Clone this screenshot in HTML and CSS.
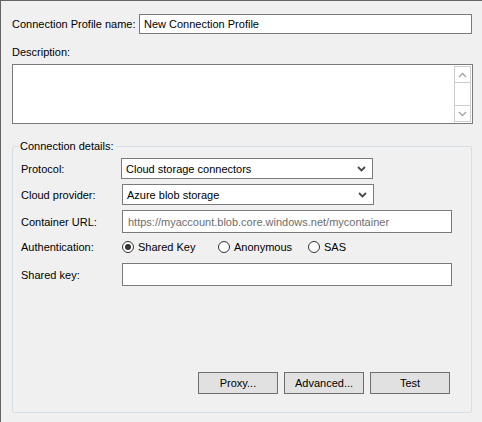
FILE: index.html
```html
<!DOCTYPE html>
<html lang="en">

<head>
    <meta charset="UTF-8">
    <title>Connection Profile</title>
    <link rel="stylesheet" href="styles.css">
</head>

<body>
    <div class="dialog">
        <div class="name-row">
            <label class="name-label">Connection Profile name:</label>
            <div class="field name-field">New Connection Profile</div>
        </div>

        <label class="desc-label">Description:</label>
        <div class="textarea">
            <div class="scrollbar">
                <div class="sb-btn">
                    <svg width="9" height="6" viewBox="0 0 9 6"><path d="M1 5 L4.5 1.5 L8 5" fill="none" stroke="#a2a2a2" stroke-width="1.3"/></svg>
                </div>
                <div class="sb-track"></div>
                <div class="sb-btn">
                    <svg width="9" height="6" viewBox="0 0 9 6"><path d="M1 1 L4.5 4.5 L8 1" fill="none" stroke="#a2a2a2" stroke-width="1.3"/></svg>
                </div>
            </div>
        </div>

        <fieldset class="group">
            <legend>Connection details:</legend>

            <div class="row">
                <span class="label">Protocol:</span>
                <div class="combo">
                    <span>Cloud storage connectors</span>
                    <svg width="9" height="6" viewBox="0 0 9 6"><path d="M1 1 L4.5 4.5 L8 1" fill="none" stroke="#4a4a4a" stroke-width="1.8"/></svg>
                </div>
            </div>

            <div class="row">
                <span class="label">Cloud provider:</span>
                <div class="combo">
                    <span>Azure blob storage</span>
                    <svg width="9" height="6" viewBox="0 0 9 6"><path d="M1 1 L4.5 4.5 L8 1" fill="none" stroke="#4a4a4a" stroke-width="1.8"/></svg>
                </div>
            </div>

            <div class="row">
                <span class="label">Container URL:</span>
                <div class="field wide placeholder">https://myaccount.blob.core.windows.net/mycontainer</div>
            </div>

            <div class="row auth-row">
                <span class="label">Authentication:</span>
                <div class="radios">
                    <span class="radio checked"><i></i>Shared Key</span>
                    <span class="radio"><i></i>Anonymous</span>
                    <span class="radio"><i></i>SAS</span>
                </div>
            </div>

            <div class="row">
                <span class="label">Shared key:</span>
                <div class="field wide key-field"></div>
            </div>

            <div class="buttons">
                <button class="btn">Proxy...</button>
                <button class="btn">Advanced...</button>
                <button class="btn">Test</button>
            </div>
        </fieldset>
    </div>
</body>

</html>
```

FILE: styles.css
```css
* {
    margin: 0;
    padding: 0;
    box-sizing: border-box;
}

body {
    background-color: #f0f0f0;
    font-family: "Liberation Sans", Arial, sans-serif;
    font-size: 11px;
    color: #000;
}

.dialog {
    width: 482px;
    height: 422px;
    border-left: 1px solid #646464;
    border-top: 1px solid #646464;
    padding: 13px 0 0 11px;
    white-space: nowrap;
}

.name-row {
    display: flex;
    align-items: center;
}

.name-label {
    width: 127px;
    flex-shrink: 0;
}

.field {
    height: 20px;
    border: 1px solid #7a7a7a;
    background: #fff;
    padding: 0 4px;
    display: flex;
    align-items: center;
    white-space: nowrap;
    overflow: hidden;
    flex-shrink: 0;
}

.name-field {
    width: 333px;
}

.desc-label {
    display: block;
    margin-top: 12px;
    height: 17px;
}

.textarea {
    width: 461px;
    height: 60px;
    margin-top: 1px;
    border: 1px solid #7a7a7a;
    background: #fff;
    display: flex;
    justify-content: flex-end;
    padding: 1px;
}

.scrollbar {
    width: 17px;
    display: flex;
    flex-direction: column;
    border: 1px solid #cdcdcd;
}

.sb-btn {
    height: 16px;
    display: flex;
    align-items: center;
    justify-content: center;
    border-bottom: 1px solid #cdcdcd;
}

.sb-btn:last-child {
    border-bottom: none;
    border-top: 1px solid #cdcdcd;
}

.sb-track {
    flex: 1;
}

.group {
    width: 460px;
    height: 275px;
    margin-top: 14px;
    border: 1px solid #d5dfe5;
    border-radius: 2px;
    padding: 4px 0 0 8px;
    display: flex;
    flex-direction: column;
    min-width: 0;
}

.group legend {
    margin-left: -3px;
    padding: 0 2px;
    line-height: 16px;
}

.row {
    display: flex;
    align-items: center;
    margin-bottom: 5px;
}

.label {
    width: 100px;
    flex-shrink: 0;
}

.combo {
    width: 252px;
    height: 21px;
    border: 1px solid #7a7a7a;
    background: #fff;
    padding: 0 6px 0 4px;
    display: flex;
    align-items: center;
    justify-content: space-between;
}

.row:nth-child(3) .combo {
    margin-left: 1px;
}

.wide {
    width: 330px;
    height: 23px;
    margin-left: 1px;
    padding: 0 5px;
}

.placeholder {
    color: #6d6d6d;
}

.auth-row {
    height: 18px;
    margin-bottom: 7px;
}

.radios {
    display: flex;
    margin-left: 1px;
}

.radio {
    display: flex;
    align-items: center;
    gap: 4px;
}

.radio:nth-child(1) {
    width: 96px;
}

.radio:nth-child(2) {
    width: 90px;
}

.radio i {
    width: 12px;
    height: 12px;
    border: 1px solid #333;
    border-radius: 50%;
    background: #fff;
    display: flex;
    align-items: center;
    justify-content: center;
}

.radio.checked i::after {
    content: "";
    width: 6px;
    height: 6px;
    border-radius: 50%;
    background: #333;
}

.buttons {
    margin-top: auto;
    margin-bottom: 18px;
    display: flex;
    justify-content: flex-end;
    gap: 6px;
    padding-right: 21px;
}

.btn {
    width: 80px;
    height: 22px;
    border: 1px solid #6f6f6f;
    background: #e1e1e1;
    font-family: inherit;
    font-size: inherit;
    color: #000;
}
```
